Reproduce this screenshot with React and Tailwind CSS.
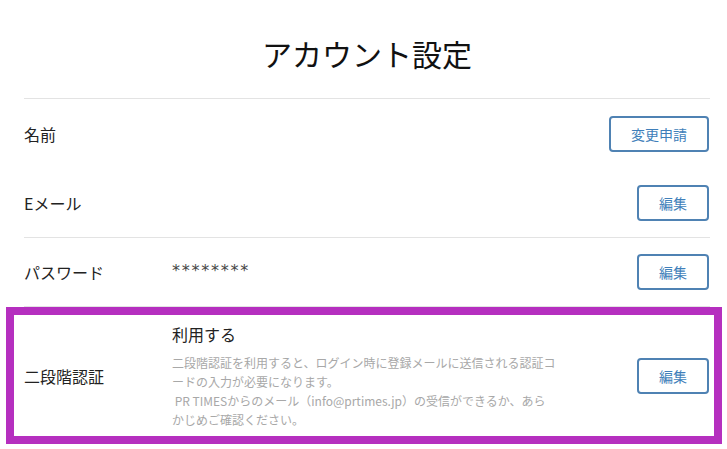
export default function App() {
  const font = { fontFamily: '"Noto Sans CJK JP", "Noto Sans", sans-serif' };
  const btn =
    "h-[36px] rounded-[4px] border-2 border-[#4f82b3] bg-white text-[14px] leading-none text-[#3f7fba] flex items-center justify-center";
  return (
    <div className="w-[727px] h-[449px] bg-white overflow-hidden" style={font}>
      <div className="pl-6 pr-[17px]">
        <h1 className="pt-[33px] pb-[25px] text-center text-[30px] leading-[40px] font-normal text-[#111]">
          アカウント設定
        </h1>

        <div className="border-t border-[#e3e3e3] h-[70px] flex items-center">
          <div className="w-[148px] text-[16px] text-[#222]">名前</div>
          <div className="flex-1" />
          <button className={btn + " w-[100px] mr-px"}>変更申請</button>
        </div>

        <div className="h-[69px] flex items-center">
          <div className="w-[148px] text-[16px] text-[#222]">Eメール</div>
          <div className="flex-1" />
          <button className={btn + " w-[72px] mr-px"}>編集</button>
        </div>

        <div className="border-t border-[#e3e3e3] h-[69px] flex items-center">
          <div className="w-[148px] text-[16px] text-[#222]">パスワード</div>
          <div
            className="flex-1 text-[16px] text-[#444] tracking-[1.75px] -mt-[2px]"
            style={{ fontFamily: '"DejaVu Sans", sans-serif' }}
          >
            ********
          </div>
          <button className={btn + " w-[72px] mr-px"}>編集</button>
        </div>

        <div className="relative border-t border-[#e3e3e3] py-[15px] flex items-center">
          <div className="w-[148px] text-[16px] text-[#222]">二段階認証</div>
          <div className="flex-1">
            <div className="text-[16px] leading-[24px] text-[#222]">利用する</div>
            <div className="mt-[7px] text-[12px] leading-[19px] text-[#a8a8a8]">
              二段階認証を利用すると、ログイン時に登録メールに送信される認証コ
              <br />
              ードの入力が必要になります。
              <br />
              &nbsp;PR TIMESからのメール（info@prtimes.jp）の受信ができるか、あら
              <br />
              かじめご確認ください。
            </div>
          </div>
          <button className={btn + " w-[72px] mr-px"}>編集</button>
          <div className="pointer-events-none absolute -left-[18px] -right-[12px] top-0 bottom-0 border-[8px] border-[#b52fbf]" />
        </div>
      </div>
    </div>
  );
}
